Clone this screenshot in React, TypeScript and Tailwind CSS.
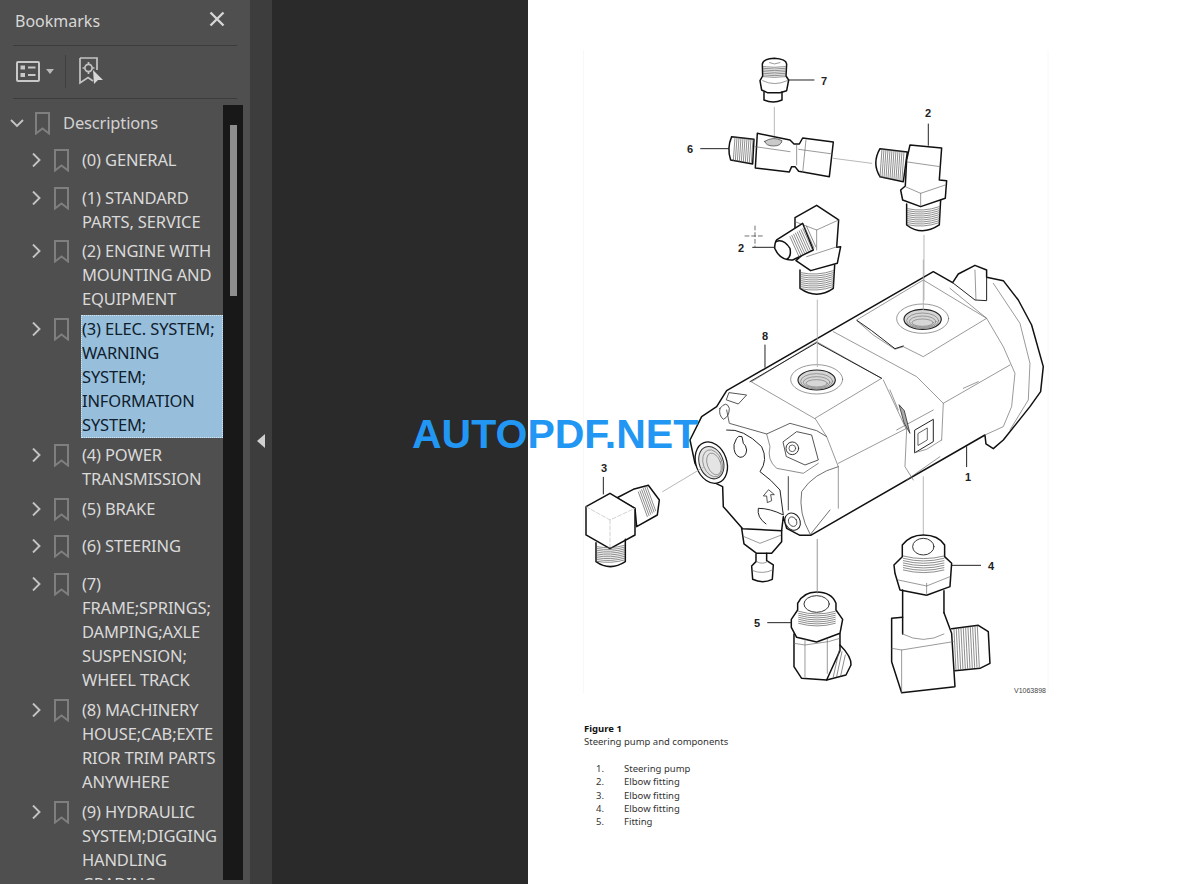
import { ReactNode } from "react";

type Bookmark = { lines: string[]; selected?: boolean };

const bookmarks: Bookmark[] = [
  { lines: ["(0) GENERAL"] },
  { lines: ["(1) STANDARD", "PARTS, SERVICE"] },
  { lines: ["(2) ENGINE WITH", "MOUNTING AND", "EQUIPMENT"] },
  { lines: ["(3) ELEC. SYSTEM;", "WARNING", "SYSTEM;", "INFORMATION", "SYSTEM;"], selected: true },
  { lines: ["(4) POWER", "TRANSMISSION"] },
  { lines: ["(5) BRAKE"] },
  { lines: ["(6) STEERING"] },
  { lines: ["(7)", "FRAME;SPRINGS;", "DAMPING;AXLE", "SUSPENSION;", "WHEEL TRACK"] },
  { lines: ["(8) MACHINERY", "HOUSE;CAB;EXTE", "RIOR TRIM PARTS", "ANYWHERE"] },
  { lines: ["(9) HYDRAULIC", "SYSTEM;DIGGING", "HANDLING", "GRADING"] },
];

const parts = [
  ["1.", "Steering pump"],
  ["2.", "Elbow fitting"],
  ["3.", "Elbow fitting"],
  ["4.", "Elbow fitting"],
  ["5.", "Fitting"],
];

const BookmarkIcon = () => (
  <svg width="15" height="23" viewBox="0 0 15 23" className="mt-px shrink-0" fill="none" stroke="#7f7f7f" strokeWidth="2">
    <path d="M1 1H14V21.5L7.5 16.5L1 21.5Z" />
  </svg>
);

const Chevron = ({ open }: { open?: boolean }) => (
  <svg width="14" height="14" viewBox="0 0 14 14" className="shrink-0" fill="none" stroke="#c4c4c4" strokeWidth="1.9">
    <path d={open ? "M1 4L7 10L13 4" : "M3 0.5L9.5 7L3 13.5"} />
  </svg>
);

const BookmarkRow = ({ lines, selected }: Bookmark) => (
  <div className="flex min-h-[37.78px] items-start py-[2.89px] pl-[30px]">
    <div className="mt-[5px] w-[24px]">
      <Chevron />
    </div>
    <div className="w-[28px]">
      <BookmarkIcon />
    </div>
    <div
      className={
        selected
          ? "-mb-px -ml-px -mt-[2px] w-[142px] whitespace-nowrap border border-dotted border-[#d8e4ee] bg-[#97bfdc] pt-px text-[#10202c]"
          : "whitespace-nowrap text-[#dadada]"
      }
    >
      {lines.map((line) => (
        <div key={line}>{line}</div>
      ))}
    </div>
  </div>
);

// a run of thread lines, bowed by `bend` at the middle
const Thread = ({ x1, y1, x2, y2, dx, dy, n, bend = 0 }: { x1: number; y1: number; x2: number; y2: number; dx: number; dy: number; n: number; bend?: number }) => (
  <g stroke="#555" strokeWidth="2" fill="none">
    {Array.from({ length: n }, (_, i) => (
      <path
        key={i}
        d={`M${x1 + dx * i} ${y1 + dy * i}Q${(x1 + x2) / 2 + dx * i} ${(y1 + y2) / 2 + dy * i + bend} ${x2 + dx * i} ${y2 + dy * i}`}
      />
    ))}
  </g>
);

// zoomed-coordinates group, drawn at 1/3 scale
const Z = ({ x, y, children }: { x: number; y: number; children: ReactNode }) => (
  <g transform={`translate(${x} ${y}) scale(0.3333)`} fill="none" stroke="#111" strokeWidth="4.5" strokeLinejoin="round" strokeLinecap="round">
    {children}
  </g>
);

const Thin = ({ d }: { d: string }) => <path d={d} stroke="#666" strokeWidth="2" />;
const Leader = ({ d }: { d: string }) => <path d={d} stroke="#222" strokeWidth="3" />;
const Guide = ({ d }: { d: string }) => <path d={d} stroke="#aaa" strokeWidth="2.5" />;

const Port = ({ cx, cy }: { cx: number; cy: number }) => (
  <>
    <ellipse cx={cx} cy={cy} rx="78" ry="44" stroke="#666" strokeWidth="2" />
    <ellipse cx={cx} cy={cy + 2} rx="56" ry="30" fill="#d6d6d6" stroke="#222" strokeWidth="3.5" />
    <ellipse cx={cx} cy={cy + 6} rx="48" ry="23" stroke="#777" strokeWidth="2" />
    <ellipse cx={cx} cy={cy + 9} rx="40" ry="17" stroke="#777" strokeWidth="2" />
    <ellipse cx={cx} cy={cy + 12} rx="32" ry="11" stroke="#777" strokeWidth="2" />
  </>
);

const labels: [string, number, number][] = [
  ["7", 824, 85],
  ["2", 928, 117],
  ["6", 690, 153],
  ["2", 741, 252],
  ["8", 765, 340],
  ["1", 968, 481],
  ["3", 604, 472],
  ["4", 991, 570],
  ["5", 757, 627],
];

const PumpDrawing = () => (
  <svg width="672" height="700" viewBox="528 0 672 700" className="block">
    <path d="M583.5 50V693M1048 50V693" stroke="#f8f8f8" fill="none" />

    {/* upper fittings */}
    <Z x={680} y={50}>
      <path d="M247 42Q250 27 283 25Q318 27 320 42L318 78L326 90L320 122L300 128H262L245 120L240 92L248 78Z" />
      <Thread x1={250} y1={50} x2={316} y2={50} dx={0} dy={5} n={7} bend={4} />
      <path d="M252 126V150Q280 162 306 150V126" />
      <Thin d="M268 38Q283 46 300 38M248 92Q283 110 322 92" />
      <Leader d="M325 90H402" />
      <Guide d="M283 172V262" />

      <path d="M155 260L222 268L218 342L152 330Q140 295 155 260Z" />
      <Thread x1={165} y1={262} x2={160} y2={332} dx={6} dy={0.7} n={10} />
      <path d="M232 250L330 270L342 282H358L368 264L460 276L448 380L356 364L345 350H335L328 366L226 354Z" />
      <Thin d="M225 290L330 305M356 298L458 312M350 285V345M378 270L368 368" />
      <path d="M254 274Q280 258 306 272Q304 288 280 288Q258 288 254 274Z" fill="#c9c9c9" stroke="#555" strokeWidth="2.5" />
      <Leader d="M62 296H146" />
      <Guide d="M460 325L575 340" />

      <path d="M600 296L682 306L670 395L600 380Q575 340 600 296Z" />
      <Thread x1={606} y1={298} x2={600} y2={382} dx={6} dy={0.7} n={12} />
      <path d="M690 285L785 294L778 390L800 392L796 445L722 470L668 450L662 420L676 408L680 330Z" />
      <Thin d="M682 336L780 350M676 410L722 430L796 405M722 430V468" />
      <path d="M680 462V525Q725 560 778 525L782 450" />
      <Thread x1={682} y1={476} x2={778} y2={470} dx={0} dy={6} n={9} bend={14} />
      <Leader d="M745 222V286" />
      <Guide d="M732 556V750" />

      <path d="M345 503L410 466L476 510L470 592L482 590L472 640L392 662L348 632L370 612L345 600Z" />
      <Thin d="M345 515L410 540L476 510M410 540V600M380 620L472 590" />
      <path d="M290 570L368 520L400 600L338 630Q300 632 284 595Q284 578 290 570Z" fill="#fff" />
      <path d="M288 575Q310 565 330 595Q335 620 320 628" />
      <Thread x1={330} y1={560} x2={358} y2={622} dx={5.5} dy={-3.5} n={10} />
      <path d="M360 660V715Q410 750 460 715L464 645" />
      <Thread x1={362} y1={668} x2={460} y2={662} dx={0} dy={6} n={9} bend={14} />
      <Leader d="M218 592H284" />
      <path d="M225 528V590M195 558H255" stroke="#555" strokeWidth="2.5" strokeDasharray="12 8" />
    </Z>

    {/* pump body */}
    <Z x={570} y={260}>
      <path d="M470 392L1090 35L1148 68L1165 42L1215 16L1250 30L1250 52L1300 62L1345 120L1385 195L1420 320L1412 395L1380 440L1300 540L1270 566L1248 552L1245 525L722 826H690L650 805L640 770L635 812L518 806L460 740L458 680L400 652L375 610L360 540L395 470L440 440L470 392Z" />
      <path d="M1148 68L1215 120L1250 122L1250 52" stroke="#222" strokeWidth="3" />
      <Thin d="M1215 30L1218 120M1140 85L1250 175L1300 260L1335 340L1325 440L1300 500L1245 525" />
      <Thin d="M1270 70L1350 190L1380 310L1375 420L1320 510" />

      {/* top faces */}
      <Thin d="M545 365L740 245L935 355L735 475Z" />
      <path d="M540 365L740 248L935 355" stroke="#222" strokeWidth="3" />
      <Port cx={740} cy={358} />
      <Thin d="M860 180L1060 60L1250 175L1060 290L1000 260L975 268L910 225Z" />
      <path d="M862 182L905 212L975 266L1000 258" stroke="#222" strokeWidth="3" />
      <Port cx={1058} cy={176} />

      {/* side seams */}
      <Thin d="M735 475L770 530L805 620V745M790 215L1040 350L1120 430L1115 540M940 360L1010 510L1005 620L1030 660M1120 430L1320 315M805 610L1010 505M960 390L985 450" />
      <Thin d="M1180 385L1225 365M980 510L1090 450M1010 660L1110 590" />
      <path d="M988 435L1003 452L1020 520L1003 490Z" fill="#aaa" stroke="#333" strokeWidth="2.5" />
      <path d="M1035 510L1090 478V545L1035 578Z" stroke="#222" strokeWidth="3" />
      <path d="M1045 520L1072 504V540L1045 556Z" stroke="#444" strokeWidth="2.5" />
      <Thin d="M1035 578L1070 568L1115 540" />

      {/* front plate */}
      <path d="M470 450L478 490L590 522L660 490L740 512L770 530" stroke="#444" strokeWidth="2.5" />
      <path d="M470 510Q520 505 575 560Q595 600 570 635Q605 660 630 690L640 765Q600 745 565 745Q560 772 588 792" stroke="#222" strokeWidth="3" />
      <path d="M590 522L600 560Q590 600 620 625L700 640L745 610" stroke="#555" strokeWidth="2" />
      <path d="M805 620Q730 640 695 695Q685 760 720 822M720 825L780 750" stroke="#555" strokeWidth="2.5" />
      <path d="M478 398L530 405L505 432L470 420ZM450 445Q470 420 478 445Q478 470 460 478Q445 465 450 445Z" stroke="#333" strokeWidth="2.5" />
      <ellipse cx="424" cy="608" rx="46" ry="64" fill="#fff" stroke="#111" strokeWidth="4" transform="rotate(-20 424 608)" />
      <ellipse cx="424" cy="608" rx="36" ry="50" fill="#e4e4e4" stroke="#333" strokeWidth="3" transform="rotate(-20 424 608)" />
      <ellipse cx="428" cy="610" rx="28" ry="42" stroke="#777" strokeWidth="2" transform="rotate(-20 428 610)" />
      <ellipse cx="432" cy="612" rx="20" ry="34" stroke="#777" strokeWidth="2" transform="rotate(-20 432 612)" />
      <path d="M640 545L680 515L725 525L745 600L705 615L650 590Z" stroke="#333" strokeWidth="2.5" />
      <circle cx="667" cy="565" r="19" fill="#fff" stroke="#333" strokeWidth="3" />
      <circle cx="667" cy="565" r="10" stroke="#444" strokeWidth="2.5" />
      <ellipse cx="668" cy="785" rx="22" ry="27" fill="#fff" stroke="#222" strokeWidth="3" transform="rotate(-30 668 785)" />
      <ellipse cx="668" cy="785" rx="12" ry="15" stroke="#444" strokeWidth="2.5" transform="rotate(-30 668 785)" />
      <path d="M492 555Q490 585 510 592Q528 592 530 570Q528 555 520 550L516 530Q505 525 500 535Z" stroke="#222" strokeWidth="3" />
      <path d="M595 690L580 708L590 708L592 728L605 722L602 704L612 704Z" stroke="#333" strokeWidth="2.5" />
      <path d="M655 650V750" stroke="#444" strokeWidth="3" />

      {/* plug */}
      <path d="M515 805L522 852L560 880H605L635 845L635 812" />
      <Thin d="M522 830L570 850L632 826" />
      <path d="M558 882V905L545 918L548 958Q578 972 607 958L610 915L590 902V880" />
      <Thin d="M560 905Q578 915 592 905M548 932Q578 944 608 930" />

      {/* fitting 3 */}
      <path d="M140 714L190 688L235 676L268 720L262 765L200 800L195 745Z" />
      <Thread x1={205} y1={696} x2={232} y2={770} dx={5} dy={-3.5} n={6} />
      <path d="M48 740L120 700L195 745V825L120 866L48 825Z" fill="#fff" />
      <path d="M48 740L120 780L195 745M120 780V866" stroke="#bbb" strokeWidth="2" strokeDasharray="12 6" />
      <path d="M78 848V905Q120 935 166 905V838" />
      <Thread x1={80} y1={860} x2={164} y2={856} dx={0} dy={5.5} n={9} bend={10} />
      <Leader d="M100 652V702M1190 560V620M585 255V322" />
      <Guide d="M278 695L400 622M742 120V320M742 838V1000M1060 0V150M1060 650V825" />
    </Z>

    {/* lower fittings */}
    <Z x={570} y={530}>
      <path d="M683 240V220Q700 186 740 186Q785 186 798 220V240L818 268L810 310L740 336L680 322L664 292L664 268Z" />
      <ellipse cx="740" cy="222" rx="38" ry="25" stroke="#333" strokeWidth="3" />
      <Thread x1={686} y1={244} x2={796} y2={244} dx={0} dy={6} n={7} bend={16} />
      <path d="M672 312V410L695 445L770 450L810 362V312" />
      <Thin d="M705 328V440M772 328V430M672 340L705 345L775 335L810 325" />
      <path d="M810 345Q845 380 843 405L828 435L770 450" />
      <path d="M808 360L790 440M816 365L800 440M826 375L812 438" stroke="#555" strokeWidth="2" />
      <Leader d="M593 278H664M1145 106H1232" />
      <Guide d="M742 28V186" />

      <path d="M997 80V45Q1020 15 1060 15Q1105 15 1124 45V80L1145 100L1140 170L1070 196L990 180L975 130L972 105Z" />
      <ellipse cx="1060" cy="50" rx="32" ry="25" stroke="#333" strokeWidth="3" />
      <Thread x1={1000} y1={78} x2={1122} y2={78} dx={0} dy={7} n={7} bend={16} />
      <path d="M998 180V312M1122 182V248" />
      <Thin d="M998 312Q1060 345 1122 312M1070 196V160M985 150L1070 168L1140 140" />
      <path d="M998 262L965 265V395L995 488L1155 470L1145 310L1122 248" />
      <Thin d="M965 355L995 360L1150 335M995 360V488" />
      <path d="M1145 296L1225 286L1255 305L1260 400L1230 415L1155 422" />
      <Thread x1={1152} y1={298} x2={1158} y2={420} dx={7} dy={-1} n={11} />
    </Z>

    {labels.map(([t, x, y], i) => (
      <text key={i} x={x} y={y} textAnchor="middle" fontSize="11" fontWeight="700" fill="#222" fontFamily="'Liberation Sans', sans-serif">
        {t}
      </text>
    ))}
    <text x="1014" y="693" fontSize="7" fill="#444" fontFamily="'Liberation Sans', sans-serif">
      V1063898
    </text>
  </svg>
);

export default function App() {
  return (
    <div className="relative flex h-[884px] w-[1200px] overflow-hidden bg-[#2a2a2a] font-['Noto_Sans',sans-serif]">
      {/* bookmarks panel */}
      <aside className="flex h-full w-[250px] shrink-0 flex-col bg-[#4f4f4f]">
        <div className="mx-[13px] flex h-[46px] shrink-0 items-center justify-between border-b border-[#3c3c3c] pb-[4px]">
          <span className="pl-[2px] text-[16px] text-[#d8d8d8]">Bookmarks</span>
          <svg width="16" height="16" viewBox="0 0 16 16" className="mb-[3px] mr-[12px]" fill="none" stroke="#d6d6d6" strokeWidth="2.4">
            <path d="M1.5 1.5L14.5 14.5M14.5 1.5L1.5 14.5" />
          </svg>
        </div>
        <div className="mx-[13px] flex h-[53px] shrink-0 items-center border-b border-[#3c3c3c] pb-[2px] pl-[3px]">
          <svg width="24" height="21" viewBox="0 0 24 21" fill="none" stroke="#c8c8c8" strokeWidth="2">
            <rect x="1" y="1" width="22" height="19" rx="1" />
            <rect x="4.5" y="4.5" width="4.5" height="4" fill="#c8c8c8" stroke="none" />
            <rect x="4.5" y="12" width="4.5" height="4" fill="#c8c8c8" stroke="none" />
            <path d="M12 6.5H19.5M12 14H19.5" />
          </svg>
          <svg width="8" height="5" viewBox="0 0 8 5" className="ml-[6px]">
            <path d="M0 0H8L4 5Z" fill="#b8b8b8" />
          </svg>
          <div className="ml-[11px] h-[33px] w-px bg-[#3f3f3f]" />
          <svg width="25" height="28" viewBox="0 0 25 28" className="ml-[13px]" fill="none" stroke="#c4c4c4" strokeWidth="1.7">
            <path d="M1 1H18V13M1 1V26L9 20.5L14 24" />
            <circle cx="9.5" cy="11" r="3.6" />
            <path d="M9.5 5V7M9.5 15V17M3.5 11H5.5M13.5 11H15.5" />
            <path d="M14 13L24 23H19L15 27Z" fill="#d8d8d8" stroke="none" />
          </svg>
        </div>
        <div className="mb-[4px] mt-[6px] flex min-h-0 flex-1 pr-[7px]">
          <div className="min-w-0 flex-1 overflow-hidden pt-[3px] text-[16.5px] leading-[24px] tracking-[-0.15px]">
            <div className="flex h-[37px] items-start pl-[10px] pt-[3px]">
              <div className="mt-[5px] w-[25px]">
                <Chevron open />
              </div>
              <div className="w-[28px]">
                <BookmarkIcon />
              </div>
              <span className="text-[#d2d2d2]">Descriptions</span>
            </div>
            {bookmarks.map((b) => (
              <BookmarkRow key={b.lines[0]} {...b} />
            ))}
          </div>
          <div className="w-5 shrink-0 bg-[#181818] pl-[7px] pt-[20px]">
            <div className="h-[171px] w-[7px] bg-[#8e8e8e]" />
          </div>
        </div>
      </aside>

      {/* collapse strip */}
      <div className="flex w-[22px] shrink-0 items-center justify-center bg-[#3d3d3d]">
        <svg width="8" height="14" viewBox="0 0 8 14" className="mt-[-2px]">
          <path d="M8 0V14L0 7Z" fill="#d0d0d0" />
        </svg>
      </div>

      <div className="w-[256px] shrink-0" />

      {/* page */}
      <main className="flex-1 bg-white">
        <PumpDrawing />
        <div className="pl-[56px] pt-[22px] text-[9.5px] leading-[13.4px] text-[#333]">
          <div className="font-bold text-[#111]">Figure 1</div>
          <div>Steering pump and components</div>
          <div className="mt-[13px]">
            {parts.map(([n, label]) => (
              <div key={n} className="flex pl-[12px]">
                <span className="w-[28px]">{n}</span>
                <span>{label}</span>
              </div>
            ))}
          </div>
        </div>
      </main>

      {/* watermark over the page */}
      <div className="absolute left-[412px] top-[410px] font-['Liberation_Sans',sans-serif] text-[41px] font-bold leading-[48px] text-[#2196f3]">
        AUTOPDF.NET
      </div>
    </div>
  );
}
